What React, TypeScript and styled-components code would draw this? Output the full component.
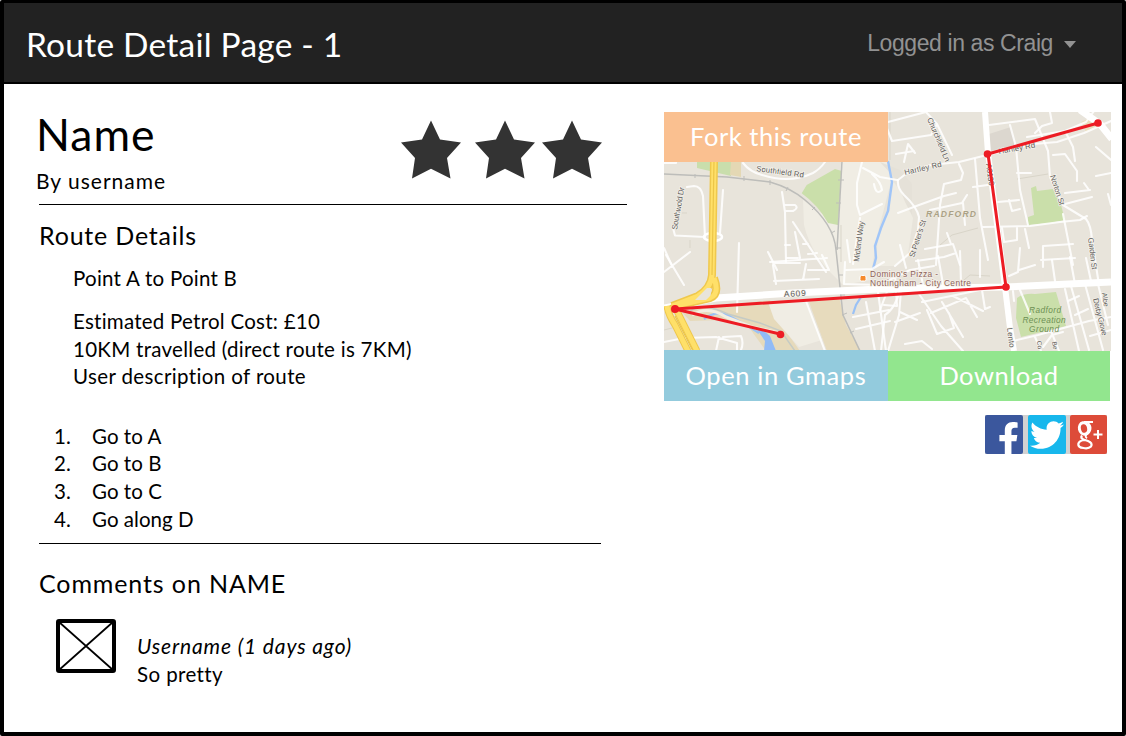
import React from 'react';
import styled, { createGlobalStyle } from 'styled-components';
import { FaFacebookF, FaTwitter } from 'react-icons/fa';

const GlobalStyle = createGlobalStyle`
  * { box-sizing: border-box; }
  body {
    margin: 0;
    background: #fff;
    color: #000;
    font-family: Lato, "Liberation Sans", sans-serif;
    font-variant-ligatures: none;
  }
`;

const Frame = styled.div`
  width: 1126px;
  height: 736px;
  background: #fff;
  border: solid #000;
  border-width: 3px 4px 4px;
  border-radius: 2px;
  overflow: hidden;
`;

const Header = styled.header`
  display: flex;
  justify-content: space-between;
  height: 81px;
  padding: 0 46px 0 22px;
  background: #222;
  border-bottom: 2px solid #000;
`;

const Line = styled.div<{ $size: number; $height: number; $spacing?: number; $top?: number; $left?: number; $italic?: boolean }>`
  font-size: ${(p) => p.$size}px;
  line-height: ${(p) => p.$height}px;
  letter-spacing: ${(p) => p.$spacing ?? 0}px;
  margin-top: ${(p) => p.$top ?? 0}px;
  padding-left: ${(p) => p.$left ?? 0}px;
  font-style: ${(p) => (p.$italic ? 'italic' : 'normal')};
  white-space: nowrap;
`;

const PageTitle = styled(Line)`
  color: #fff;
`;

const UserMenu = styled.div`
  display: flex;
  align-items: center;
  gap: 11px;
  height: 80px;
  color: #929292;
  font: 23px/80px "Liberation Sans", Arial, sans-serif;
  letter-spacing: -0.4px;
`;

const Caret = styled.span`
  border: solid transparent;
  border-width: 7px 6px 0;
  border-top-color: #929292;
  margin-top: 3px;
`;

const Content = styled.main`
  display: flex;
  justify-content: space-between;
  padding: 28px 11px 0 32px;
`;

const Details = styled.section`
  width: 592px;
`;

const Heading = styled.div`
  display: flex;
  justify-content: space-between;
  height: 92px;
  padding-right: 26.5px;
`;

const Stars = styled.div`
  display: flex;
  padding-top: 8px;
`;

const StarIcon = styled.svg<{ $gap: number }>`
  width: 60px;
  height: 59px;
  margin-left: ${(p) => p.$gap}px;
  fill: #333;
`;

const Rule = styled.hr<{ $width: number }>`
  width: ${(p) => p.$width}px;
  height: 1px;
  margin: 0 0 0 3px;
  border: 0;
  background: #000;
`;

const Steps = styled.ol`
  list-style: none;
  margin: 32px 0 0;
  padding: 0 0 0 18px;
  height: 120px;
`;

const Step = styled.li`
  display: grid;
  grid-template-columns: 38px auto;
  height: 27.6px;
`;

const Comment = styled.article`
  display: flex;
  gap: 21px;
  padding: 20px 0 0 20px;
`;

const Avatar = styled.svg`
  width: 60px;
  height: 54px;
`;

const Side = styled.aside`
  width: 447px;
`;

const MapPanel = styled.div`
  position: relative;
  height: 239px;
`;

const MapDrawing = styled.svg`
  display: block;
  width: 447px;
  height: 239px;
`;

const Action = styled.button<{ $color: string; $height: number; $width: number; $spacing: number; $lift?: number }>`
  width: ${(p) => p.$width}px;
  height: ${(p) => p.$height}px;
  padding: 0 0 ${(p) => p.$lift ?? 0}px;
  border: 0;
  background: ${(p) => p.$color};
  color: #fff;
  font: 25.5px/${(p) => p.$height - (p.$lift ?? 0)}px Lato, sans-serif;
  letter-spacing: ${(p) => p.$spacing}px;
  white-space: nowrap;
`;

const ForkAction = styled(Action)`
  position: absolute;
  top: 0;
  left: 0;
`;

const Actions = styled.div`
  display: flex;
  align-items: flex-end;
  margin-top: -1px;
  position: relative;
`;

const Social = styled.div`
  display: flex;
  justify-content: space-between;
  width: 122px;
  height: 39px;
  margin: 14px 0 0 321px;
  background: #d2d2d2;
`;

const SocialTile = styled.a<{ $color: string; $width?: number }>`
  display: flex;
  justify-content: center;
  align-items: center;
  width: ${(p) => p.$width ?? 38}px;
  height: 39px;
  border-radius: 2px;
  overflow: hidden;
  color: #fff;
  background: ${(p) => p.$color};
`;

const FacebookGlyph = styled(FaFacebookF)`
  width: 23px;
  height: 34px;
  margin: 9px 0 0 9px;
  flex: none;
`;

const TwitterGlyph = styled(FaTwitter)`
  width: 34px;
  height: 34px;
`;

const Star = ({ gap }: { gap: number }) => (
  <StarIcon $gap={gap} viewBox="0 0 60 59" preserveAspectRatio="none">
    <path d="M30 0.5 39 19.5 60 22.5 46 38 49.5 58.5 30 48.8 11 58.5 14 38 0 22.5 21 19.5Z" />
  </StarIcon>
);

const minorRoads = [
  'M664 163H676V161',
  'M673 228 675 235.5 705 237 703 196Q701 186 694 186L687 187',
  'M723 190 720 233',
  'M664 248 672 266M739 243 737 312',
  'M782 192 785 212 786 262M784 205H795Q799 208 793 211H785',
  'M793 222 826 272M785 245H790M787 258H798M803 244H808M808 254 817 253M768 252 777 270M773 263H800',
  'M743 163Q750 172 762 175 790 184 813 173 820 169 825 162',
  'M862 162 857 183V205L860 215 882 204M860 218 853 264M863 168 880 177 897 180M872 174Q881 182 882 190 876 196 874 184',
  'M664 272 690 252M666 255 684 285M773 265 776 284M770 262 827 258M774 281 819 279M800 258 795 232M806 264 803 280M822 255 829 270H808',
  'M845 262 844 284 882 285M846 270 872 269 884 262M850 262 847 240',
  'M664 342 684 338 716 337 737 343V351M719 337 716 351M723 337 741 336Q744 343 741 350',
  'M806 301 825 351M853 317 889 310M856 329 890 321M866 302 875 351M878 292 886 351',
  'M898 180 907 173 931 165 959 162 987 155 1034 144 1057 142 1084 133 1111 121',
  'M898 180Q897 188 904 195 917 207 919 217L918 230 910 253 895 266',
  'M888 122 926 112 937 124 931 135 892 141 886 126M937 124 952 155M904 162 908 144 915 153M896 154 914 151',
  'M898 213 919 205 944 196 956 193M930 210 962 203 967 195M963 203 965 225M959 164 963 173 961 180 944 184 940 205 936 265',
  'M975 159 980 218 988 260M973 187 995 184M983 227 1030 226 1060 222 1080 220 1087 216',
  'M989 125 1035 119 1048 151 1050 177 1063 205 1086 219Q1091 225 1092 240L1099 285',
  'M1010 125 1016 147 1020 190 1028 225M1017 173H1031M998 202 1019 200M1009 200 1012 211 1020 209M1002 228 1004 242 1017 240V228M1025 229 1029 248',
  'M1035 133 1042 126 1052 123 1050 112M1027 137 1065 131 1086 122 1094 111M1053 155 1065 154 1077 171 1077 181M1065 131 1073 147 1075 161',
  'M1065 193 1090 190M1065 204 1092 197M1089 190 1084 183M1096 176 1111 173M1108 194 1111 205M1096 147 1111 160M1063 214 1073 265',
  'M1043 267V246L1073 244M1041 260 1075 258M900 245 906 268M925 249 953 244 960 265M916 261 944 257 956 253M951 244 947 233',
  'M880 310 888 289M884 305 897 306 895 273M881 284 910 270 934 266M918 260 923 285M938 256 943 284M960 251 961 283M980 250 980 277M1020 248 1018 272 1009 276M1019 270 1035 265M1052 260 1055 281M1070 257 1075 284M1086 258 1091 281',
  'M900 290Q895 309 885 315L881 351M901 291 899 315 888 351M917 291 941 326 963 351M922 302 980 290M931 313 966 298 977 317M953 296 983 311M942 302 963 337M927 310 937 334 954 328 949 313M895 322 920 313M905 344 922 341 932 349M900 312 917 320M982 290 985 309 990 307',
  'M1013 341 1038 335 1089 321 1111 317M1035 337 1041 351M1051 331 1059 351M1065 289 1079 351M1071 286 1089 350M1085 284 1103 350M1098 284 1108 325M1043 347 1052 335 1063 332M1090 336 1111 330',
  'M1013 291 1014 301M1020 290 1030 314M1068 301 1079 296M1075 315 1088 309',
];

const MapView = () => (
  <MapDrawing viewBox="664 112 447 239" fontFamily='"Liberation Sans", Roboto, sans-serif'>
    <rect x="664" y="112" width="447" height="239" fill="#e8e4db" />
    <path d="M841 162H888L891 182 878 232 870 280 843 285 828 270Q810 250 804 225L803 200 838 225Z" fill="#f0ede4" />
    <path d="M891 178 902 194 913 218 908 254 895 266 876 266 878 232 890 210Z" fill="#efece3" />
    <path d="M880 162 897 180 905 202 912 215V184L900 170Z" fill="#e5e1d8" />
    <path d="M697 162H731V176L697 168Z" fill="#c9deac" />
    <path d="M731 162H741V177L730 175Z" fill="#e4d8b4" />
    <path d="M801.7 193.3 806.7 185 835 169 841.7 171 838 225 828 223Q818 205 801.7 193.3Z" fill="#cadfaa" />
    <path d="M1031 188 1036 186 1037 191 1053 189 1061 205 1065 220 1050 223 1028 225 1028 217 1034 215Z" fill="#cadfaa" />
    <path d="M1017 298Q1024 293 1035 294L1056 292 1061 309 1066 326 1021 337 1016 318Z" fill="#cadfaa" />
    <path d="M989 134 1011 127 1015 145 990 151Z" fill="#dcd7cf" />
    <path d="M1081 122 1092 117 1100 127 1086 132Z" fill="#eadfbe" />
    <path d="M681 311 770 300 778 320 800 351H766L748 326 724 320 690 321Z" fill="#e6dabb" />
    <path d="M768 302 806 300 822 340 799 347 774 319Z" fill="#f0ede4" />
    <path d="M809 302 839 297 846 325 861 351H827Z" fill="#e7dbbd" />
    <path d="M756 328Q764 330 770 336L776 351H764L765 341Z" fill="#91bbf6" />
    <path d="M704 319Q718 309 731 317L748 326 759 333M861 297 856 305 853 314" fill="none" stroke="#9ac1f5" strokeWidth="2.2" />
    <path d="M888 161 892 182 888 211 881 228 875 246 876 258 873 269" fill="none" stroke="#a0c5f8" strokeWidth="2.4" />
    <g fill="none" stroke="#d9d5c9" strokeWidth="1">
      <path d="M1017 179 1048 174M940 245 952 235 978 228M958 285 970 275 990 276M841 225V262M890 112V160" />
      <path d="M682 213H687M690 240V248M664 330 676 327" />
    </g>
    <g fill="none" stroke="#fff" strokeOpacity="0.85" strokeWidth="2.1" strokeLinejoin="round" strokeLinecap="round">
      {minorRoads.map((d) => <path key={d} d={d} />)}
    </g>
    <g fill="none" stroke="#bdbdba" strokeWidth="1.5">
      <path d="M664 174 727 177 770 182Q791 188 805 200 834 224 836 250L843 315 860 351" />
      <path d="M842 161 837 250" />
      <path d="M695 174V178M714 174V178M744 176V181M770 180V185M788 187 786 191M815 207 812 210M831 233 835 231M836 248 841 248M838 275 843 275M840 295 845 295M842 315 847 313M850 333 854 331M836 203H841M838 180H844" strokeWidth="1" />
    </g>
    <path d="M690 311Q704 302 728 314L760 323 781 331 795 351" fill="none" stroke="#c5cbc5" strokeWidth="1.5" />
    <path d="M692 315Q708 305 726 317L752 327 780 333" fill="none" stroke="#f3efe2" strokeWidth="3" />
    <g fill="none" stroke="#fff" strokeLinejoin="round">
      <path d="M664 308 716 298 793 293 880 289 1005 287 1111 282" strokeWidth="7" />
      <path d="M985 112 988 153 1005 287 1010 328 1014 351" strokeWidth="6" />
      <path d="M1080 110 1100 124 1112 139" strokeWidth="7" />
      <ellipse cx="713" cy="237" rx="9" ry="4" strokeWidth="2.4" />
    </g>
    <g fill="none" strokeLinejoin="round">
      <path d="M714 161 712 275Q711 288 698 296L672 306M714 278Q720 294 710 298L684 304 671 309" stroke="#efc84d" strokeWidth="8" />
      <path d="M667 306Q668 314 675 325L688 351M676 309 697 351" stroke="#efc84d" strokeWidth="7" />
      <path d="M714 161 712 275Q711 288 698 296L672 306M714 278Q720 294 710 298L684 304 671 309M667 306Q668 314 675 325L688 351M676 309 697 351" stroke="#ffe069" strokeWidth="5" />
      <path d="M714 161 712 275M675 316 693 351" stroke="#ecc548" strokeWidth="1.2" />
      <path d="M707 288 695 300H706Q713 295 711 288Z" fill="#e8e4db" />
    </g>
    <g fill="#5e5c59" stroke="#f5f2ec" strokeWidth="1.4" paintOrder="stroke" fontSize="7.8">
      <text transform="translate(756 171) rotate(8)" textLength="48">Southfield Rd</text>
      <text transform="translate(677 230) rotate(-80)" textLength="43">Southwold Dr</text>
      <text transform="translate(859 262) rotate(-83)" textLength="41">Midland Way</text>
      <text transform="translate(927 119) rotate(67)" textLength="47">Churchfield Ln</text>
      <text transform="translate(905 175) rotate(-13)" textLength="38">Hartley Rd</text>
      <text transform="translate(999 154) rotate(-10)" textLength="37">Hartley Rd</text>
      <text transform="translate(914 258) rotate(-72)" textLength="39">St Peter's St</text>
      <text transform="translate(1050 176) rotate(72)" textLength="31">Norton St</text>
      <text transform="translate(1088 238) rotate(83)" textLength="32">Garden St</text>
      <text transform="translate(1093 299) rotate(76)" textLength="38">Derby Grove</text>
      <text transform="translate(1007 328) rotate(83)" textLength="20">Lento</text>
      <text transform="translate(1102 293) rotate(82)" fontSize="7">Albe</text>
      <text transform="translate(986 164) rotate(82)" textLength="22">A6130</text>
      <text transform="translate(1037 341) rotate(84)" fontSize="6.5">Co</text>
      <text transform="translate(1052 342) rotate(80)" fontSize="6.5">Be</text>
      <text transform="translate(784 297) rotate(-3)" textLength="22" fontSize="8.4">A609</text>
    </g>
    <g fill="#aaa186" stroke="#efebdf" strokeWidth="1" paintOrder="stroke" fontSize="8.6" fontStyle="italic" fontWeight="700">
      <text x="926" y="217" textLength="50">RADFORD</text>
    </g>
    <g fill="#6d8f53" fontSize="8.3" fontStyle="italic" textAnchor="middle">
      <text x="1045" y="313" textLength="32">Radford</text>
      <text x="1044" y="322.5" textLength="43">Recreation</text>
      <text x="1044" y="332" textLength="30">Ground</text>
    </g>
    <g fill="#8d6259" stroke="#f4efe7" strokeWidth="1.4" paintOrder="stroke" fontSize="8.4">
      <text x="870" y="276.5" textLength="68">Domino's Pizza -</text>
      <text x="870" y="286" textLength="101">Nottingham - City Centre</text>
    </g>
    <rect x="860" y="275.5" width="6" height="5.5" rx="1.5" fill="#f68a2c" stroke="#fff" strokeWidth="1" />
    <path d="M780 334 675 309 1006 287 988 154 1098 123" fill="none" stroke="#ed1c24" strokeWidth="3" strokeLinejoin="round" />
    <g fill="#ed1c24">
      <circle cx="675" cy="309" r="4" />
      <circle cx="780.5" cy="334.5" r="3.8" />
      <circle cx="1006" cy="287" r="3.8" />
      <circle cx="987.5" cy="154" r="3.8" />
      <circle cx="1098" cy="123" r="3.8" />
    </g>
  </MapDrawing>
);

const GooglePlusGlyph = () => (
  <svg width="37" height="39" viewBox="0 0 37 39" fill="none" stroke="#fff">
    <ellipse cx="14" cy="13.5" rx="4.6" ry="5.8" strokeWidth="3" transform="rotate(-12 14 13.5)" />
    <path d="M14 7H23M18 8Q21 11 20.5 14 20 17.5 16.5 19.5 14.5 21.5 17 23.2" strokeWidth="1.8" />
    <path d="M12 20.5Q10 23 13.5 24.5L18 26Q23 28 21 31.5 18.5 34 13.5 33 8 32.5 8.3 29 8.8 25.5 15 25" strokeWidth="2.2" />
    <path d="M23.5 19.5H32.5M28 15V24" strokeWidth="2" />
  </svg>
);

const steps = ['Go to A', 'Go to B', 'Go to C', 'Go along D'];

export default function App() {
  return (
    <>
      <GlobalStyle />
      <Frame>
        <Header>
          <PageTitle $size={33.5} $height={82} $spacing={0.22}>Route Detail Page - 1</PageTitle>
          <UserMenu>Logged in as Craig<Caret /></UserMenu>
        </Header>
        <Content>
          <Details>
            <Heading>
              <div>
                <Line $size={44.5} $height={44} $spacing={1}>Name</Line>
                <Line $size={21} $height={28} $top={11} $spacing={1}>By username</Line>
              </div>
              <Stars>
                <Star gap={-0.5} />
                <Star gap={14} />
                <Star gap={7} />
              </Stars>
            </Heading>
            <Rule $width={588} />
            <Line $size={25} $height={32} $top={14} $left={3} $spacing={0.8}>Route Details</Line>
            <Line $size={20.5} $height={28} $top={13} $left={37} $spacing={0.25}>Point A to Point B</Line>
            <Line $size={20.5} $height={27.6} $top={16} $left={37} $spacing={0.25}>Estimated Petrol Cost: £10</Line>
            <Line $size={20.5} $height={27.6} $left={37} $spacing={0.28}>10KM travelled (direct route is 7KM)</Line>
            <Line $size={20.5} $height={27.6} $left={37} $spacing={0.38}>User description of route</Line>
            <Steps>
              {steps.map((step, i) => (
                <Step key={step}>
                  <Line $size={20.5} $height={27.6}>{i + 1}.</Line>
                  <Line $size={20.5} $height={27.6} $spacing={0.04}>{step}</Line>
                </Step>
              ))}
            </Steps>
            <Rule $width={562} />
            <Line $size={25} $height={32} $top={23} $left={3} $spacing={0.88}>Comments on NAME</Line>
            <Comment>
              <Avatar viewBox="0 0 60 54" fill="none" stroke="#000">
                <path d="M3 3 57 51M57 3 3 51" strokeWidth="1.7" />
                <rect x="2" y="2" width="56" height="50" rx="1" strokeWidth="4" />
              </Avatar>
              <div>
                <Line $size={21} $height={28} $top={13} $spacing={0.87} $italic>Username (1 days ago)</Line>
                <Line $size={20.5} $height={28} $spacing={0.4}>So pretty</Line>
              </div>
            </Comment>
          </Details>
          <Side>
            <MapPanel>
              <MapView />
              <ForkAction $color="#fac090" $width={224} $height={50} $spacing={0.55} $lift={1}>Fork this route</ForkAction>
            </MapPanel>
            <Actions>
              <Action $color="#93cbdd" $width={224} $height={51} $spacing={0.6}>Open in Gmaps</Action>
              <Action $color="#92e68e" $width={222} $height={50} $spacing={0.5} $lift={1}>Download</Action>
            </Actions>
            <Social>
              <SocialTile $color="#3b579d"><FacebookGlyph /></SocialTile>
              <SocialTile $color="#17b7ec"><TwitterGlyph /></SocialTile>
              <SocialTile $color="#dd4b39" $width={37}><GooglePlusGlyph /></SocialTile>
            </Social>
          </Side>
        </Content>
      </Frame>
    </>
  );
}
